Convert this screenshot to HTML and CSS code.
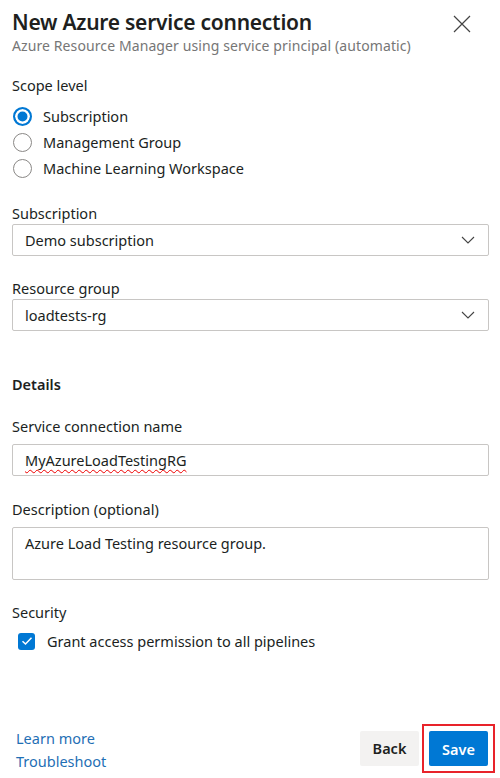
FILE: index.html
```html
<!DOCTYPE html>
<html lang="en">
<head>
<meta charset="utf-8">
<title>New Azure service connection</title>
<link rel="stylesheet" href="styles.css">
</head>
<body>
<div class="panel">
  <header class="head">
    <div class="titles">
      <h1 class="title">New Azure service connection</h1>
      <div class="subtitle">Azure Resource Manager using service principal (automatic)</div>
    </div>
    <button class="close" aria-label="Close">
      <svg width="18" height="18" viewBox="0 0 18 18"><path d="M1 1 L17 17 M17 1 L1 17" stroke="#444" stroke-width="1.2" fill="none"/></svg>
    </button>
  </header>

  <main class="body">
    <section class="scope">
      <div class="label">Scope level</div>
      <div class="radios">
        <div class="radio-row"><span class="radio checked"></span><span>Subscription</span></div>
        <div class="radio-row"><span class="radio"></span><span>Management Group</span></div>
        <div class="radio-row"><span class="radio"></span><span>Machine Learning Workspace</span></div>
      </div>
    </section>

    <section class="field f-sub">
      <div class="label">Subscription</div>
      <div class="select"><span>Demo subscription</span>
        <svg width="14" height="8" viewBox="0 0 14 8"><path d="M1 1 L7 7 L13 1" stroke="#444" stroke-width="1.1" fill="none"/></svg>
      </div>
    </section>

    <section class="field f-rg">
      <div class="label">Resource group</div>
      <div class="select"><span>loadtests-rg</span>
        <svg width="14" height="8" viewBox="0 0 14 8"><path d="M1 1 L7 7 L13 1" stroke="#444" stroke-width="1.1" fill="none"/></svg>
      </div>
    </section>

    <h2 class="details">Details</h2>

    <section class="field f-name">
      <div class="label">Service connection name</div>
      <div class="input"><span class="squiggle">MyAzureLoadTestingRG</span></div>
    </section>

    <section class="field f-desc">
      <div class="label">Description (optional)</div>
      <div class="textarea">Azure Load Testing resource group.</div>
    </section>

    <section class="field f-sec">
      <div class="label">Security</div>
      <div class="check-row">
        <span class="checkbox">
          <svg width="12" height="10" viewBox="0 0 12 10"><path d="M1.5 5.2 L4.5 8 L10.5 1.8" stroke="#fff" stroke-width="1.5" fill="none"/></svg>
        </span>
        <span>Grant access permission to all pipelines</span>
      </div>
    </section>
  </main>

  <footer class="foot">
    <div class="links">
      <a href="#">Learn more</a>
      <a href="#">Troubleshoot</a>
    </div>
    <div class="buttons">
      <button class="btn back">Back</button>
      <span class="highlight"><button class="btn save">Save</button></span>
    </div>
  </footer>
</div>
</body>
</html>
```

FILE: styles.css
```css
* { box-sizing: border-box; }
html, body { margin: 0; padding: 0; background: #fff; }
body {
  font-family: "Noto Sans", "Open Sans", sans-serif;
  color: #201f1e;
  font-size: 14px;
  width: 500px;
  height: 778px;
  overflow: hidden;
}
.panel {
  height: 778px;
  display: flex;
  flex-direction: column;
  padding: 0 11px 0 12px;
}
.head {
  display: flex;
  justify-content: space-between;
  align-items: flex-start;
  padding-top: 6px;
}
.title {
  margin: 0;
  font-size: 21px;
  font-weight: 600;
  line-height: 32px;
  letter-spacing: -0.25px;
  color: #201f1e;
}
.subtitle {
  font-size: 14px;
  color: #767676;
  line-height: 18px;
  margin-top: -1px;
  letter-spacing: 0.1px;
}
.close {
  border: 0;
  background: none;
  padding: 0;
  margin: 9px 18px 0 0;
  width: 18px;
  height: 18px;
  display: flex;
}
.body { flex: 1; }
.label { font-size: 14.5px; line-height: 20px; }
.scope { margin-top: 20px; }
.radios { display: flex; flex-direction: column; margin-top: 8px; }
.radio-row {
  display: flex;
  align-items: center;
  height: 26px;
  gap: 11px;
  font-size: 14.5px;
}
.radio {
  width: 19px;
  height: 19px;
  border-radius: 50%;
  border: 1px solid #8a8886;
  margin-left: 1px;
  flex: none;
}
.radio.checked {
  border: 2.5px solid #0078d4;
  background: #0078d4;
  box-shadow: inset 0 0 0 2.5px #fff;
}
.field .label { margin-bottom: 1px; }
.f-sub { margin-top: 22px; }
.f-rg { margin-top: 22px; }
.select, .input {
  display: flex;
  align-items: center;
  justify-content: space-between;
  height: 32px;
  border: 1px solid #c8c6c4;
  border-radius: 2px;
  padding: 0 13px 0 12px;
  font-size: 14.5px;
}
.details {
  margin: 43px 0 0;
  font-size: 14.5px;
  font-weight: 600;
  line-height: 20px;
}
.f-name { margin-top: 22px; }
.f-name .label { margin-bottom: 8px; }
.squiggle {
  text-decoration: underline wavy #e00;
  text-decoration-thickness: 1px;
  text-underline-offset: 3px;
}
.f-desc { margin-top: 23px; }
.f-desc .label { margin-bottom: 8px; }
.textarea {
  height: 53px;
  border: 1px solid #c8c6c4;
  border-radius: 2px;
  padding: 5px 12px;
  font-size: 14.5px;
  line-height: 20px;
}
.f-sec { margin-top: 22px; }
.check-row {
  display: flex;
  align-items: center;
  gap: 12px;
  margin-top: 9px;
  margin-left: 6px;
  font-size: 14.5px;
}
.checkbox {
  width: 17px;
  height: 17px;
  background: #0078d4;
  border-radius: 3px;
  display: flex;
  align-items: center;
  justify-content: center;
}
.foot {
  display: flex;
  justify-content: space-between;
  align-items: flex-end;
  padding: 0 0 5px 4px;
}
.links { display: flex; flex-direction: column; }
.links a {
  color: #1f6fb5;
  text-decoration: none;
  font-size: 14.5px;
  line-height: 23px;
}
.buttons {
  display: flex;
  align-items: center;
  gap: 3px;
  padding-bottom: 0;
}
.btn {
  font-family: inherit;
  font-size: 14.5px;
  font-weight: 600;
  height: 35px;
  width: 59px;
  border: 0;
  border-radius: 2px;
  padding: 0;
}
.back { background: #f3f2f1; color: #201f1e; margin-bottom: 1px; }
.save { background: #0078d4; color: #fff; display: block; }
.highlight {
  display: block;
  border: 2px solid #e8232a;
  padding: 5px 5px 5px 5px;
  margin-right: -6px;
}
```
